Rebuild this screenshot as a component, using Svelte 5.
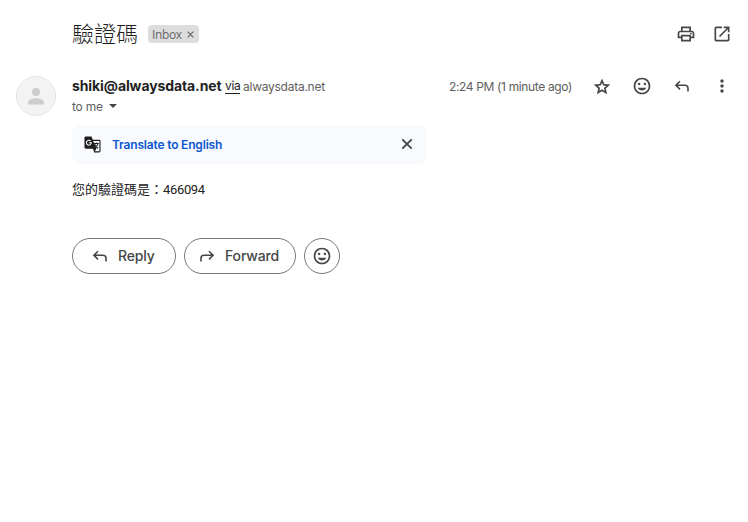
<script>
  const paths = {
    print: 'M640-640v-120H320v120h-80v-200h480v200h-80Zm-480 80h640-640Zm560 100q17 0 28.500-11.500T760-500q0-17-11.500-28.500T720-540q-17 0-28.500 11.500T680-500q0 17 11.500 28.500T720-460Zm-80 260v-160H320v160h320Zm80 80H240v-160H80v-240q0-51 35-85.500t85-34.500h560q51 0 85.500 34.500T880-520v240H720v160Zm80-240v-160q0-17-11.500-28.500T760-560H200q-17 0-28.500 11.500T160-520v160h80v-80h480v80h80Z',
    open: 'M200-120q-33 0-56.500-23.500T120-200v-560q0-33 23.500-56.500T200-840h280v80H200v560h560v-280h80v280q0 33-23.500 56.500T760-120H200Zm188-212-56-56 372-372H560v-80h280v280h-80v-144L388-332Z',
    star: 'm354-247 126-76 126 77-33-144 111-96-146-13-58-136-58 135-146 13 111 97-33 143ZM233-80l65-281L80-550l288-25 112-265 112 265 288 25-218 189 65 281-247-149L233-80Z',
    smile: 'M480-260q68 0 123.500-38.500T684-400H276q25 63 80.500 101.500T480-260ZM620-520q25 0 42.500-17.500T680-580t-17.500-42.500T620-640t-42.500 17.500T560-580t17.500 42.500T620-520Zm-280 0q25 0 42.500-17.500T400-580t-17.500-42.500T340-640t-42.500 17.500T280-580t17.500 42.500T340-520ZM480-80q-83 0-156-31.500T197-197t-85.500-127T80-480t31.500-156T197-763t127-85.500T480-880t156 31.500T763-763t85.500 127T880-480t-31.500 156T763-197t-127 85.500T480-80Zm0-80q134 0 227-93t93-227-93-227-227-93-227 93-93 227 93 227 227 93Z',
    more: 'M480-160q-33 0-56.500-23.500T400-240t23.500-56.500T480-320t56.500 23.500T560-240t-23.500 56.500T480-160Zm0-240q-33 0-56.500-23.500T400-480t23.500-56.500T480-560t56.500 23.500T560-480t-23.500 56.500T480-400Zm0-240q-33 0-56.500-23.500T400-720t23.500-56.500T480-800t56.500 23.500T560-720t-23.500 56.500T480-640Z'
  };
</script>

{#snippet icon(name)}
  <svg class="icon" viewBox="0 -960 960 960" aria-hidden="true"><path d={paths[name]} /></svg>
{/snippet}

{#snippet arrow(flip)}
  <svg class="icon line" class:flip viewBox="0 0 20 20" aria-hidden="true"><path d="M8 5.200L3.900 9.300 8 13.400M4.200 9.300H13a3 3 0 0 1 3 3v3.200" /></svg>
{/snippet}

<main>
  <header class="subject">
    <h1>驗證碼</h1>
    <span class="label"><span class="inbox">Inbox</span><svg viewBox="0 0 7 7"><path d="M.7.7l5.600 5.600M6.300.7L.7 6.300" /></svg></span>
    <div class="tools">{@render icon('print')}{@render icon('open')}</div>
  </header>

  <article>
    <div class="avatar">
      <svg viewBox="0 0 16 17"><circle cx="8" cy="4" r="4" /><path d="M0 16.500v-2.300C0 11.500 5 10.300 8 10.300s8 1.200 8 3.900v2.300z" /></svg>
    </div>
    <div class="message">
      <div class="sender">
        <strong>shiki@alwaysdata.net</strong>
        <span class="via">via</span>
        <span class="domain">alwaysdata.net</span>
        <span class="time">2:24 PM (1 minute ago)</span>
        <div class="actions">{@render icon('star')}{@render icon('smile')}{@render arrow(false)}{@render icon('more')}</div>
      </div>
      <div class="recipient"><span>to me</span><i></i></div>
      <div class="translate">
        <svg class="glyph" viewBox="0 0 18 18" aria-hidden="true">
          <path class="solid" d="M2 .5h6l1.200 3.500H16a1.500 1.500 0 0 1 1.500 1.500V16a1.500 1.500 0 0 1-1.500 1.500h-5.200L9.600 13.500H2A1.500 1.500 0 0 1 .5 12V2A1.500 1.500 0 0 1 2 .5z" />
          <path class="paper" d="M9.700 5.300H16.300v10.900H11.400l1.900-2.700z" />
          <path class="g" d="M7.100 5.300a2.600 2.600 0 1 0 .7 1.900H5.300" />
          <path class="letter" d="M10.300 8h5.400M13 6.800V8M14.800 8c-.4 2-1.700 3.500-3 4.500M11.600 9c.7 1.700 1.900 3 3.500 4" />
        </svg>
        <span>Translate to English</span>
        <svg class="icon line close" viewBox="0 0 20 20" aria-hidden="true"><path d="M5.300 5.300l9.400 9.400M14.700 5.300l-9.400 9.400" /></svg>
      </div>
      <p>您的驗證碼是：<span>466094</span></p>
      <div class="buttons">
        <button class="reply">{@render arrow(false)}<span>Reply</span></button>
        <button class="forward">{@render arrow(true)}<span>Forward</span></button>
        <button class="react" aria-label="React">{@render icon('smile')}</button>
      </div>
    </div>
  </article>
</main>

<style>
  :global(body) { background: #fff; }
  main { width: 748px; height: 522px; box-sizing: border-box; overflow: hidden; background: #fff; color: #1f1f1f; font-family: Inter, "Noto Sans CJK TC", sans-serif; }
  .icon { display: block; flex: none; width: 20px; height: 20px; fill: #444746; }
  .line { fill: none; stroke: #444746; stroke-width: 1.6; }
  .flip { transform: scaleX(-1); }
  .subject { display: flex; align-items: center; height: 68px; padding: 0 16px 0 72px; box-sizing: border-box; }
  h1 { margin: 0; padding-bottom: 5px; width: 76px; font: 300 22px/28px "Noto Sans CJK TC", sans-serif; white-space: nowrap; }
  .label { display: flex; align-items: center; box-sizing: border-box; width: 51px; height: 18px; padding: 0 5px 0 4px; border-radius: 4px; background: #ddd; color: #666; }
  .inbox { flex: 1; padding-top: 1px; font: 12px/18px "Open Sans", sans-serif; letter-spacing: -.35px; }
  .label svg { width: 7px; height: 7px; margin-top: 1px; stroke: #666; stroke-width: 1.2; fill: none; }
  .tools { display: flex; gap: 16px; margin-left: auto; }
  article { display: flex; padding: 8px 16px 0; }
  .avatar { display: flex; justify-content: center; box-sizing: border-box; width: 40px; height: 40px; margin-right: 16px; padding-top: 11px; border: 1px solid #e3e3e3; border-radius: 50%; background: #f3f3f3; }
  .avatar svg { width: 16px; height: 17px; fill: #cdcdcd; }
  .message { flex: 1; min-width: 0; }
  .sender { display: flex; align-items: center; height: 20px; white-space: nowrap; font-size: 12px; line-height: 20px; color: #5e5e5e; }
  strong { width: 153px; font-size: 14px; font-weight: 700; letter-spacing: -.1px; color: #1f1f1f; }
  .via { width: 15px; margin-right: 3px; line-height: 14px; letter-spacing: -.3px; color: #222; border-bottom: 1px solid #222; }
  .via, .domain, .time { margin-top: 1px; }
  .domain { letter-spacing: -.25px; }
  .time { margin-left: auto; letter-spacing: -.36px; }
  .actions { display: flex; gap: 20px; margin-left: 20px; }
  .recipient { display: flex; align-items: center; gap: 6px; height: 20px; font-size: 12px; letter-spacing: -.2px; color: #5e5e5e; }
  .recipient i { border: 4px solid transparent; border-top-color: #444746; border-bottom: 0; }
  .translate { display: flex; align-items: center; box-sizing: border-box; width: 355px; height: 39px; margin-top: 9px; padding: 0 10px 1px 12px; border-radius: 8px; background: #f8fafd; color: #0b57d0; font-size: 12px; font-weight: 600; letter-spacing: -.18px; }
  .glyph { width: 17px; height: 17px; margin-right: 11px; }
  .translate .close { margin-left: auto; stroke-width: 1.9; }
  .solid { fill: #1f1f1f; }
  .paper { fill: #f8fafd; }
  .g, .letter { fill: none; stroke: #f8fafd; stroke-width: 1.1; }
  .letter { stroke: #1f1f1f; }
  p { margin: 15px 0 0; height: 20px; white-space: nowrap; font: 400 13px/20px "Noto Sans CJK TC", sans-serif; color: #222; }
  p span { font: 400 13px/20px Roboto, sans-serif; letter-spacing: -.35px; }
  .buttons { display: flex; gap: 8px; margin-top: 39px; }
  button { display: flex; align-items: center; box-sizing: border-box; height: 36px; margin: 0; padding: 0 0 0 17px; border: 1px solid #747775; border-radius: 18px; background: #fff; color: #444746; font: 500 14px/20px Inter, sans-serif; letter-spacing: -.15px; }
  button span { margin-left: 8px; }
  .reply { width: 104px; }
  .forward { width: 112px; padding-left: 12px; }
  .react { width: 36px; padding: 0 7px; }
</style>
